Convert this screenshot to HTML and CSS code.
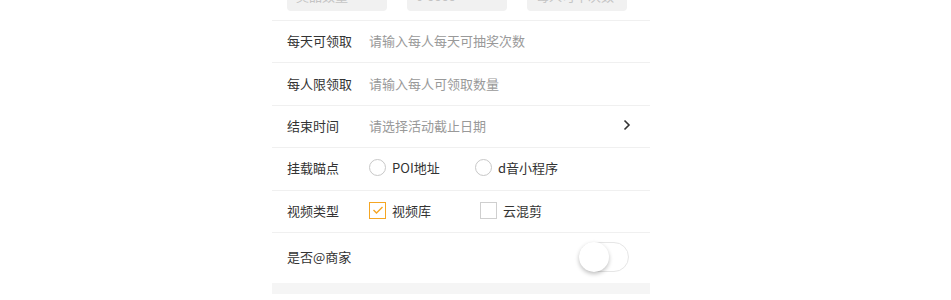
FILE: index.html
```html
<!DOCTYPE html>
<html lang="zh">

<head>
    <meta charset="UTF-8">
    <title>活动设置</title>
    <link rel="stylesheet" href="styles.css">
</head>

<body>
    <div class="form">
        <div class="fila filaCajas">
            <div class="caja">奖品数量</div>
            <div class="caja">0-9999</div>
            <div class="caja">每人可中次数</div>
        </div>
        <div class="fila">
            <span class="etiqueta">每天可领取</span>
            <span class="placeholder">请输入每人每天可抽奖次数</span>
        </div>
        <div class="fila">
            <span class="etiqueta">每人限领取</span>
            <span class="placeholder">请输入每人可领取数量</span>
        </div>
        <div class="fila">
            <span class="etiqueta">结束时间</span>
            <span class="placeholder">请选择活动截止日期</span>
            <svg class="flecha" width="8" height="12" viewBox="0 0 8 12">
                <path d="M1.5 1.5 L6 6 L1.5 10.5" fill="none" stroke="#333" stroke-width="1.6" />
            </svg>
        </div>
        <div class="fila">
            <span class="etiqueta">挂载瞄点</span>
            <label class="opcion opcionPoi"><span class="radio"></span>POI地址</label>
            <label class="opcion"><span class="radio"></span>d音小程序</label>
        </div>
        <div class="fila">
            <span class="etiqueta">视频类型</span>
            <label class="opcion opcionLib">
                <span class="check activo">
                    <svg width="12" height="10" viewBox="0 0 12 10">
                        <path d="M1.5 5 L4.5 8 L10.5 2" fill="none" stroke="#f5a623" stroke-width="1.4" />
                    </svg>
                </span>视频库
            </label>
            <label class="opcion"><span class="check"></span>云混剪</label>
        </div>
        <div class="fila filaUltima">
            <span class="etiqueta">是否@商家</span>
            <span class="switch"><span class="bola"></span></span>
        </div>
        <div class="pie"></div>
    </div>
</body>

</html>
```

FILE: styles.css
```css
* {
    margin: 0;
    padding: 0;
    box-sizing: border-box;
}

body {
    background-color: white;
    font-family: "Noto Sans CJK SC", "Noto Sans", sans-serif;
    font-size: 13px;
    color: #333;
}

.form {
    width: 378px;
    margin-left: 272px;
}

.fila {
    height: 42.4px;
    display: flex;
    align-items: center;
    padding: 0 15px 2px;
    border-bottom: 1px solid #f0f0f0;
}

.filaCajas {
    height: 37px;
    margin-top: -16px;
    gap: 20px;
    align-items: flex-start;
    padding-bottom: 0;
}

.caja {
    width: 100px;
    height: 27px;
    background-color: #f1f1f1;
    border-radius: 4px;
    color: #c4c4c4;
    line-height: 23px;
    padding-left: 9px;
}

.etiqueta {
    width: 82px;
    flex-shrink: 0;
}

.placeholder {
    color: #999;
    flex: 1;
}

.flecha {
    margin-right: 4px;
}

.opcion {
    display: flex;
    align-items: center;
    gap: 6px;
}

.opcionPoi {
    width: 106px;
}

.opcionLib {
    width: 111px;
}

.radio {
    width: 17px;
    height: 17px;
    border: 1px solid #c8c8c8;
    border-radius: 50%;
}

.check {
    width: 17px;
    height: 17px;
    border: 1px solid #cfcfcf;
    display: flex;
    align-items: center;
    justify-content: center;
}

.check.activo {
    border: 1.5px solid #f5a623;
}

.filaUltima {
    height: 50px;
    justify-content: space-between;
    border-bottom: 0;
}

.switch {
    width: 50px;
    height: 30px;
    border: 1px solid #e6e6e6;
    border-radius: 15px;
    position: relative;
    margin-right: 6px;
}

.bola {
    position: absolute;
    left: -1px;
    top: -1px;
    width: 30px;
    height: 30px;
    border-radius: 50%;
    background-color: white;
    box-shadow: 0 2px 4px rgba(0, 0, 0, 0.25);
}

.pie {
    height: 11px;
    background-color: #f5f5f5;
}
```
